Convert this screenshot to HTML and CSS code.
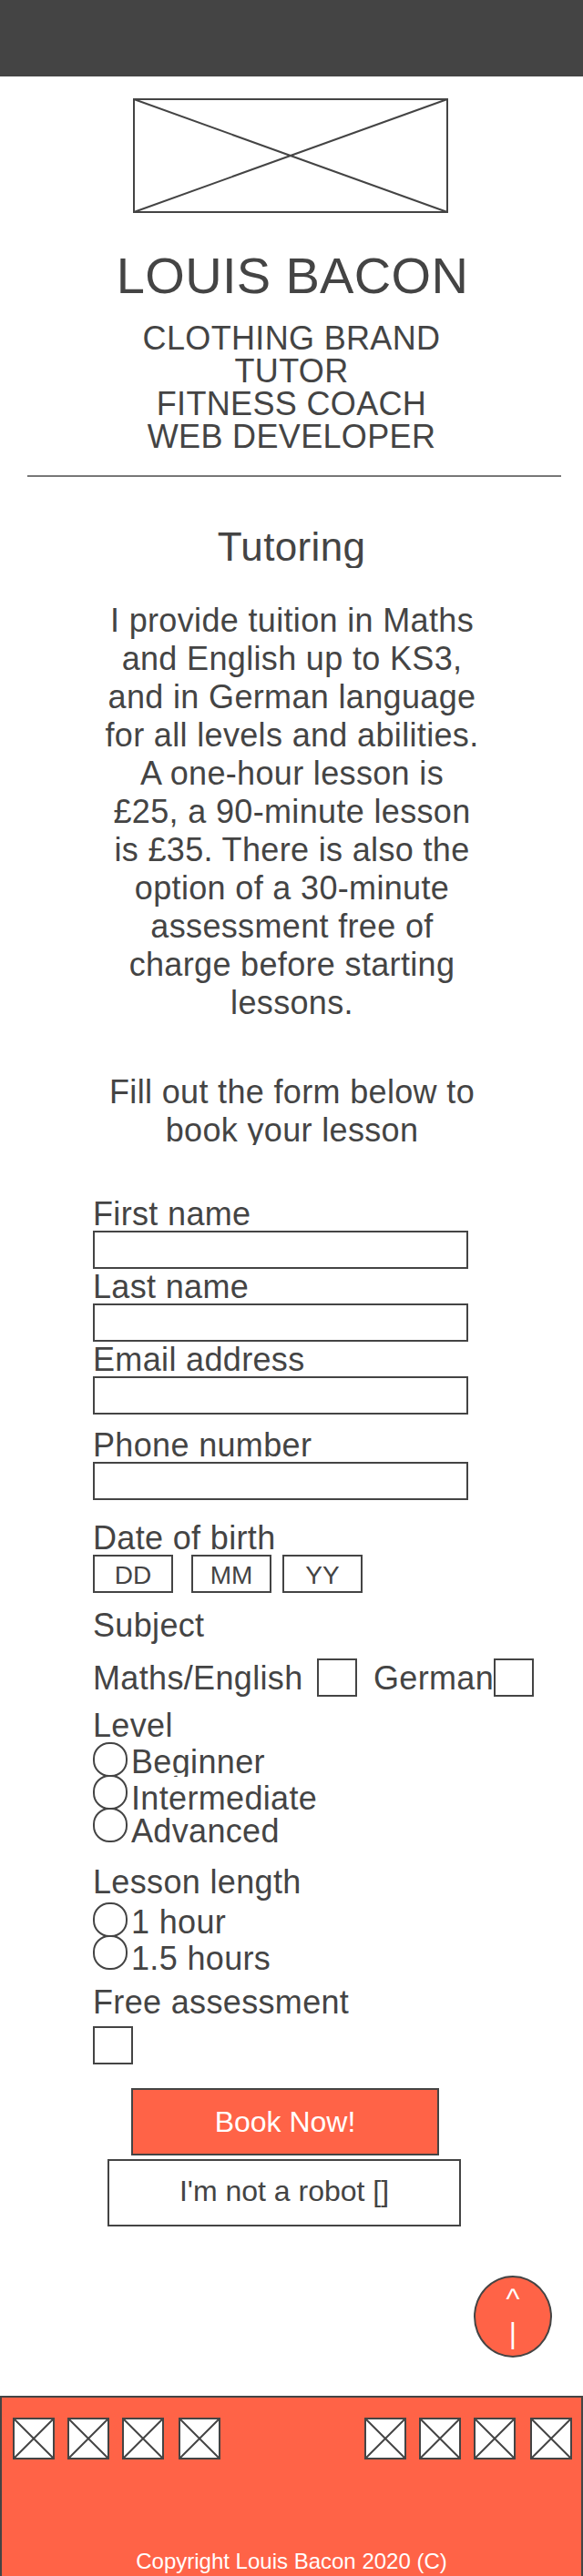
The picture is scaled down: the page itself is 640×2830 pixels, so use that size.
FILE: index.html
```html
<!DOCTYPE html>
<html lang="en">
<head>
<meta charset="utf-8">
<title>Louis Bacon - Tutoring</title>
<link rel="stylesheet" href="styles.css">
</head>
<body>
<header class="topbar"></header>
<main class="page">
  <svg class="hero-image" viewBox="0 0 346 126"><rect x="1" y="1" width="344" height="124"/><path d="M1 1 345 125M345 1 1 125"/></svg>
  <h1 class="title">LOUIS BACON</h1>
  <p class="roles">CLOTHING BRAND<br>TUTOR<br>FITNESS COACH<br>WEB DEVELOPER</p>
  <hr class="rule">
  <h2 class="section-title">Tutoring</h2>
  <p class="intro">I provide tuition in Maths<br>and English up to KS3,<br>and in German language<br>for all levels and abilities.<br>A one-hour lesson is<br>£25, a 90-minute lesson<br>is £35. There is also the<br>option of a 30-minute<br>assessment free of<br>charge before starting<br>lessons.</p>
  <p class="prompt">Fill out the form below to<br>book your lesson</p>

  <form class="form">
    <div class="field"><span class="label">First name</span><div class="input"></div></div>
    <div class="field"><span class="label">Last name</span><div class="input"></div></div>
    <div class="field"><span class="label">Email address</span><div class="input"></div></div>
    <div class="field field-phone"><span class="label">Phone number</span><div class="input"></div></div>
    <div class="field field-dob"><span class="label">Date of birth</span>
      <div class="dates"><div class="date date-day">DD</div><div class="date date-month">MM</div><div class="date">YY</div></div>
    </div>
    <span class="label label-subject">Subject</span>
    <div class="subjects">
      <span class="label subject-maths">Maths/English</span><div class="check"></div>
      <span class="label subject-german">German</span><div class="check"></div>
    </div>
    <span class="label label-level">Level</span>
    <div class="options">
      <div class="radios"><i class="radio"></i><i class="radio"></i><i class="radio"></i></div>
      <div class="option-names"><span class="option clipped">Beginner</span><span class="option">Intermediate</span><span class="option option-tight">Advanced</span></div>
    </div>
    <span class="label label-length">Lesson length</span>
    <div class="options options-length">
      <div class="radios"><i class="radio"></i><i class="radio"></i></div>
      <div class="option-names"><span class="option">1 hour</span><span class="option">1.5 hours</span></div>
    </div>
    <span class="label label-free">Free assessment</span>
    <div class="check check-free"></div>
    <div class="button book">Book Now!</div>
    <div class="button robot">I'm not a robot []</div>
  </form>
  <a class="to-top"><span>^</span><span>|</span></a>
</main>
<footer class="footer">
  <div class="links">
    <div class="icons">
      <svg class="icon" viewBox="0 0 46 46"><rect x="1" y="1" width="44" height="44"/><path d="M1 1 45 45M45 1 1 45"/></svg>
      <svg class="icon" viewBox="0 0 46 46"><rect x="1" y="1" width="44" height="44"/><path d="M1 1 45 45M45 1 1 45"/></svg>
      <svg class="icon" viewBox="0 0 46 46"><rect x="1" y="1" width="44" height="44"/><path d="M1 1 45 45M45 1 1 45"/></svg>
      <svg class="icon icon-last" viewBox="0 0 46 46"><rect x="1" y="1" width="44" height="44"/><path d="M1 1 45 45M45 1 1 45"/></svg>
    </div>
    <div class="icons">
      <svg class="icon" viewBox="0 0 46 46"><rect x="1" y="1" width="44" height="44"/><path d="M1 1 45 45M45 1 1 45"/></svg>
      <svg class="icon" viewBox="0 0 46 46"><rect x="1" y="1" width="44" height="44"/><path d="M1 1 45 45M45 1 1 45"/></svg>
      <svg class="icon" viewBox="0 0 46 46"><rect x="1" y="1" width="44" height="44"/><path d="M1 1 45 45M45 1 1 45"/></svg>
      <svg class="icon icon-last" viewBox="0 0 46 46"><rect x="1" y="1" width="44" height="44"/><path d="M1 1 45 45M45 1 1 45"/></svg>
    </div>
  </div>
  <p class="copyright">Copyright Louis Bacon 2020 (C)</p>
</footer>
</body>
</html>
```
FILE: styles.css
```css
* { box-sizing: border-box; }
body {
  margin: 0;
  width: 640px;
  height: 2830px;
  overflow: hidden;
  display: flex;
  flex-direction: column;
  background: #fff;
  color: #444;
  font-family: "Liberation Sans", Arial, sans-serif;
  font-size: 36px;
  line-height: 42px;
  letter-spacing: 0.34px;
}
h1, h2, p { margin: 0; font-weight: 400; text-align: center; }
svg { display: block; fill: #fff; stroke: #444; stroke-width: 2; }

.topbar { height: 84px; flex: none; background: #444; }
.page { height: 2548px; flex: none; display: flex; flex-direction: column; }
.hero-image { width: 346px; height: 126px; margin: 24px 0 0 146px; flex: none; }
.title { margin-top: 37px; padding-left: 2px; font-size: 56px; line-height: 64px; }
.roles { margin-top: 19px; line-height: 36px; }
.rule { width: 586px; height: 2px; margin: 24px 0 0 30px; border: 0; background: #777; flex: none; }
.section-title { height: 48px; margin-top: 52px; overflow: hidden; font-size: 44px; line-height: 50px; flex: none; }
.intro { margin-top: 37px; padding-left: 1px; }
.prompt { height: 79px; margin-top: 56px; padding-left: 1px; overflow: hidden; flex: none; }

.form { width: 500px; margin: 55px 0 0 102px; display: flex; flex-direction: column; }
.label { display: block; height: 40px; line-height: 42px; white-space: nowrap; flex: none; }
.field { height: 80px; }
.field .label { height: 39px; }
.input { width: 412px; height: 42px; border: 2px solid #444; }
.field-phone { margin-top: 14px; }
.field-dob { margin-top: 22px; }
.dates { display: flex; }
.date {
  width: 88px;
  height: 42px;
  border: 2px solid #444;
  font-size: 28px;
  line-height: 42px;
  letter-spacing: 0;
  text-align: center;
}
.date-day { margin-right: 20px; }
.date-month { margin-right: 12px; }
.label-subject { margin-top: 16px; }
.subjects { display: flex; height: 42px; margin-top: 17px; }
.subjects .label { line-height: 44px; }
.subject-maths { width: 246px; }
.subject-german { width: 132px; margin-left: 18px; }
.check { width: 44px; height: 42px; border: 2px solid #444; flex: none; }
.label-level { margin-top: 11px; height: 39px; }
.options { display: flex; height: 110px; }
.radios { width: 42px; }
.radio { display: block; width: 38px; height: 38px; margin-bottom: -2px; border: 2px solid #444; border-radius: 18px; }
.option-names { padding-top: 1px; }
.option { display: block; height: 40px; line-height: 42px; white-space: nowrap; }
.clipped { height: 37px; overflow: hidden; margin-bottom: 3px; }
.option-tight { margin-top: -4px; }
.label-length { margin-top: 23px; height: 43px; }
.options-length { height: 74px; }
.label-free { margin-top: 15px; }
.check-free { margin-top: 7px; }
.button { height: 74px; border: 2px solid #444; font-size: 32px; line-height: 70px; letter-spacing: 0; text-align: center; }
.book { width: 338px; margin: 26px 0 0 42px; background: #ff6347; color: #fff; }
.robot { width: 388px; margin: 4px 0 0 16px; line-height: 66px; }
.to-top {
  width: 86px;
  height: 90px;
  margin: 54px 0 0 520px;
  padding-top: 4px;
  display: flex;
  flex-direction: column;
  align-items: center;
  flex: none;
  border: 2px solid #444;
  border-radius: 50%;
  background: #ff6347;
  color: #fff;
  font-size: 32px;
  line-height: 38px;
  letter-spacing: 0;
}

.footer { height: 200px; flex: none; border: 2px solid #444; border-bottom: 0; background: #ff6347; color: #fff; }
.links { display: flex; justify-content: space-between; padding: 22px 10px 0 12px; }
.icons { display: flex; gap: 14px; }
.icon { width: 46px; height: 46px; }
.icon-last { margin-left: 2px; }
.copyright { margin-top: 98px; font-size: 24px; line-height: 28px; letter-spacing: 0; }
```
